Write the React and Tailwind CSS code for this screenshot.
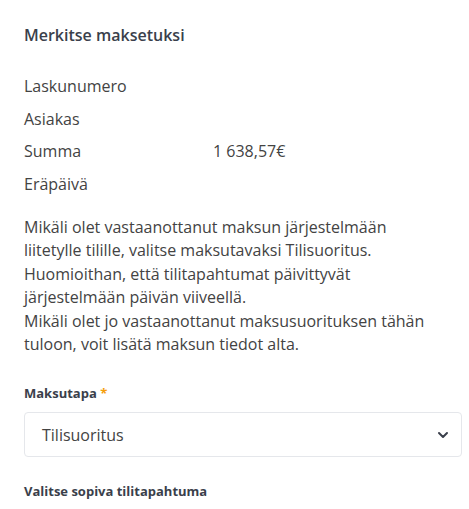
import React from "react";

const rows = [
  ["Laskunumero", ""],
  ["Asiakas", ""],
  ["Summa", "1 638,57€"],
  ["Eräpäivä", ""],
];

export default function App() {
  return (
    <div className="w-[469px] h-[509px] bg-white overflow-hidden pl-[24px] pr-[7px] pt-[24px] text-[#434343]" style={{ fontFamily: '"Open Sans", Lato, sans-serif' }}>
      <h2 className="text-[16px] font-semibold text-[#3a3f4b] leading-[22px]">Merkitse maksetuksi</h2>
      <div className="mt-[24px] flex flex-col">
        {rows.map(([k, v]) => (
          <div key={k} className="flex h-[32.5px] items-center text-[16px]">
            <div className="w-[189px]">{k}</div>
            <div>{v}</div>
          </div>
        ))}
      </div>
      <div className="mt-[16px] text-[16px] leading-[23.4px] pr-[20px]">
        <p>Mikäli olet vastaanottanut maksun järjestelmään liitetylle tilille, valitse maksutavaksi Tilisuoritus. Huomioithan, että tilitapahtumat päivittyvät järjestelmään päivän viiveellä.</p>
        <p>Mikäli olet jo vastaanottanut maksusuorituksen tähän tuloon, voit lisätä maksun tiedot alta.</p>
      </div>
      <div className="mt-[28px] text-[13px] font-bold text-[#3a3f4b] leading-[18px]">
        Maksutapa <span className="text-[#f59e0b]">*</span>
      </div>
      <div className="mt-[10px] h-[45px] border border-[#e5e7eb] rounded-[4px] flex items-center justify-between pl-[17px] pr-[12px] text-[16px] text-[#434343]">
        <span>Tilisuoritus</span>
        <svg width="12" height="8" viewBox="0 0 12 8" fill="none">
          <path d="M2 2l4 4 4-4" stroke="#3a3f4b" strokeWidth="2" strokeLinecap="round" strokeLinejoin="round" />
        </svg>
      </div>
      <div className="mt-[25px] text-[13px] font-bold text-[#3a3f4b] leading-[18px]">Valitse sopiva tilitapahtuma</div>
    </div>
  );
}
